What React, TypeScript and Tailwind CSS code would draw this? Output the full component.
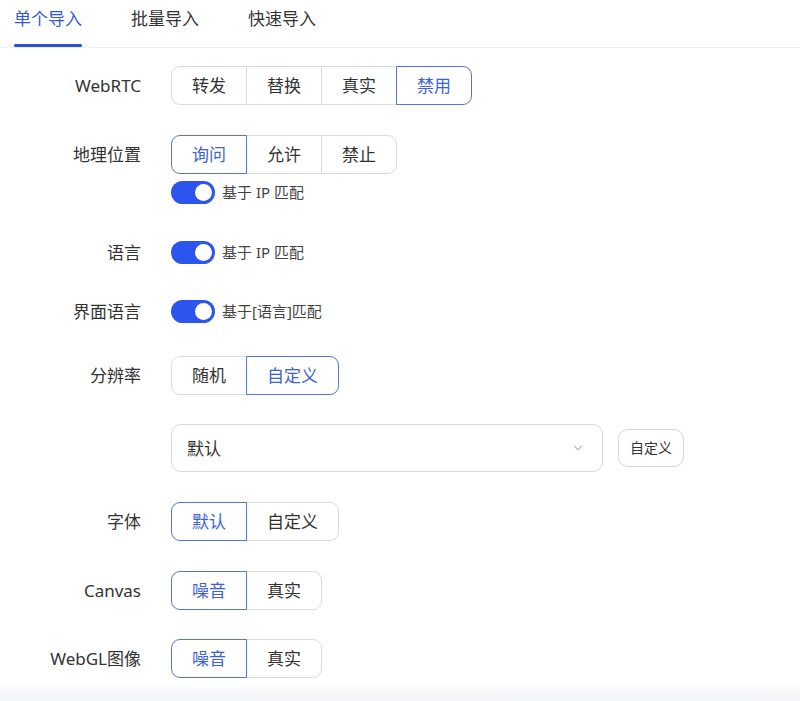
import React, { useState } from "react";

/* TABS */
const TABS = ["单个导入", "批量导入", "快速导入"];

type SegProps = {
  options: string[];
  value: string;
  onChange: (v: string) => void;
};

const Segmented: React.FC<SegProps> = ({ options, value, onChange }) => (
  <div className="flex">
    {options.map((o, i) => {
      const active = o === value;
      const wide = o.length > 2;
      return (
        <button
          key={o}
          onClick={() => onChange(o)}
          className={[
            "relative h-[39px] border text-[17px] leading-none bg-white",
            wide ? "w-[93px]" : "w-[76px]",
            i > 0 ? "-ml-px" : "",
            i === 0 ? "rounded-l-[9px]" : "",
            i === options.length - 1 ? "rounded-r-[9px]" : "",
            active
              ? "z-10 border-[#5576d6] text-[#3d62d8]"
              : "border-[#dcdde1] text-[#333]",
          ].join(" ")}
        >
          {o}
        </button>
      );
    })}
  </div>
);

const Toggle: React.FC<{ label: string }> = ({ label }) => {
  const [on, setOn] = useState(true);
  return (
    <div className="flex items-center gap-[7px]">
      <button
        onClick={() => setOn(!on)}
        className={`relative w-[44px] h-[23px] rounded-full ${on ? "bg-[#2b55ee]" : "bg-[#c9ccd3]"}`}
      >
        <span
          className={`absolute top-[3px] w-[17px] h-[17px] rounded-full bg-white ${on ? "left-[24px]" : "left-[3px]"}`}
        />
      </button>
      <span className="text-[15px] leading-none text-[#444]">{label}</span>
    </div>
  );
};

const Row: React.FC<{ label?: string; className?: string; children: React.ReactNode }> = ({
  label,
  className = "",
  children,
}) => (
  <div className={`flex items-center shrink-0 ${className}`}>
    <div className="w-[141px] text-right text-[17px] leading-none text-[#333] shrink-0">{label}</div>
    <div className="ml-[30px] flex items-center">{children}</div>
  </div>
);

const App: React.FC = () => {
  const [tab, setTab] = useState(TABS[0]);
  const [webrtc, setWebrtc] = useState("禁用");
  const [geo, setGeo] = useState("询问");
  const [res, setRes] = useState("自定义");
  const [font, setFont] = useState("默认");
  const [canvas, setCanvas] = useState("噪音");
  const [webgl, setWebgl] = useState("噪音");

  return (
    <div
      className="w-[800px] h-[701px] bg-white overflow-hidden flex flex-col"
      style={{ fontFamily: '"Noto Sans", "Noto Sans CJK SC", sans-serif' }}
    >
      {/* TABS */}
      <div className="flex gap-[49px] pl-[14px] border-b border-[#eeeff2] h-[48px] shrink-0">
        {TABS.map((t) => (
          <button
            key={t}
            onClick={() => setTab(t)}
            className={`relative h-full pb-[10px] text-[17px] leading-none ${tab === t ? "text-[#3358d4]" : "text-[#333]"}`}
          >
            {t}
            {tab === t && (
              <span className="absolute left-0 right-0 bottom-0 h-[3px] rounded-full bg-[#2c4fd6]" />
            )}
          </button>
        ))}
      </div>

      {/* FORM */}
      <div className="flex-1 flex flex-col">
        <Row label="WebRTC" className="mt-[18px] h-[39px]">
          <Segmented options={["转发", "替换", "真实", "禁用"]} value={webrtc} onChange={setWebrtc} />
        </Row>

        <Row label="地理位置" className="mt-[30px] h-[39px]">
          <Segmented options={["询问", "允许", "禁止"]} value={geo} onChange={setGeo} />
        </Row>
        <Row className="mt-[7px] h-[23px]">
          <Toggle label="基于 IP 匹配" />
        </Row>

        <Row label="语言" className="mt-[37px] h-[23px]">
          <Toggle label="基于 IP 匹配" />
        </Row>

        <Row label="界面语言" className="mt-[36px] h-[23px]">
          <Toggle label="基于[语言]匹配" />
        </Row>

        <Row label="分辨率" className="mt-[33px] h-[39px]">
          <Segmented options={["随机", "自定义"]} value={res} onChange={setRes} />
        </Row>

        <Row className="mt-[29px] h-[48px]">
          <div className="w-[432px] h-[48px] rounded-[10px] border border-[#d6d8dc] flex items-center justify-between pl-[15px] pr-[17px]">
            <span className="text-[17px] leading-none text-[#333]">默认</span>
            <svg width="14" height="14" viewBox="0 0 24 24" fill="none" stroke="#b8bbc2" strokeWidth="2" strokeLinecap="round" strokeLinejoin="round">
              <path d="M6 9l6 6 6-6" />
            </svg>
          </div>
          <button className="ml-[15px] w-[66px] h-[38px] rounded-[10px] border border-[#d6d8dc] text-[14px] leading-none text-[#333]">
            自定义
          </button>
        </Row>

        <Row label="字体" className="mt-[30px] h-[39px]">
          <Segmented options={["默认", "自定义"]} value={font} onChange={setFont} />
        </Row>

        <Row label="Canvas" className="mt-[30px] h-[39px]">
          <Segmented options={["噪音", "真实"]} value={canvas} onChange={setCanvas} />
        </Row>

        <Row label="WebGL图像" className="mt-[29px] h-[39px]">
          <Segmented options={["噪音", "真实"]} value={webgl} onChange={setWebgl} />
        </Row>
      </div>

      {/* BOTTOM FADE */}
      <div className="h-[20px] shrink-0 bg-gradient-to-b from-white to-[#f3f4f7]" />
    </div>
  );
};

export default App;
